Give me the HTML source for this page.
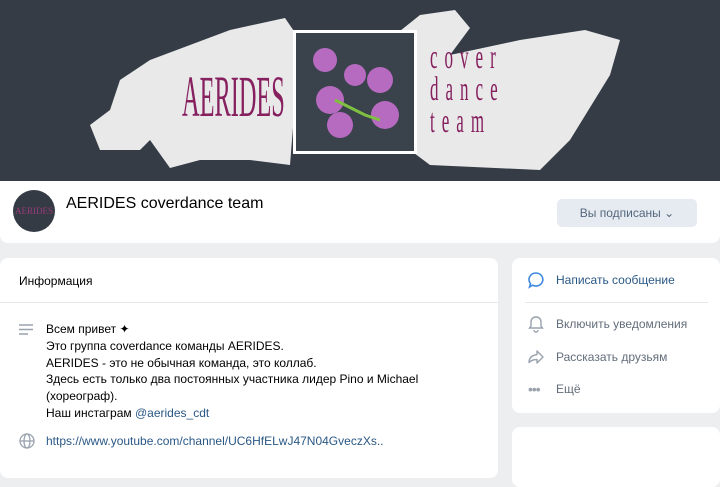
<!DOCTYPE html>
<html><head><meta charset="utf-8"><style>
*{margin:0;padding:0;box-sizing:border-box}
body{width:720px;height:468px;overflow:hidden;background:#edeef0;font-family:"Liberation Sans",sans-serif;position:relative}
.abs{position:absolute}
.card{position:absolute;background:#fff;border-radius:8px}
.t{font-size:12px;color:#000;line-height:16.8px}
.side{position:absolute;left:556px;font-size:12px;color:#626d7a}
</style></head><body>
<div class="abs" style="left:0;top:0;width:720px;height:181px;background:#353c46;overflow:hidden">
<svg width="720" height="181" class="abs" style="left:0;top:0">
<path d="M110 110 L120 80 L150 60 L230 30 L285 18 L300 40 L290 165 L250 160 L200 160 L170 168 L150 140 L140 150 L100 150 L90 125 Z" fill="#e9e9e9"/>
<path d="M395 35 L420 15 L455 10 L470 28 L450 55 L520 40 L585 30 L620 40 L610 75 L570 140 L540 170 L430 165 L410 150 Z" fill="#e9e9e9"/>
</svg>
<div class="abs" style="left:293px;top:30px;width:124px;height:124px;border:3px solid #fff;background:#3a424c"></div>
<svg class="abs" style="left:305px;top:40px" width="100" height="105">
<g fill="#b66ac0"><circle cx="20" cy="20" r="12"/><circle cx="50" cy="35" r="11"/><circle cx="75" cy="40" r="13"/><circle cx="25" cy="60" r="14"/><circle cx="80" cy="75" r="14"/><circle cx="35" cy="85" r="13"/></g>
<path d="M30 60 L60 75 L75 80" stroke="#7fc040" stroke-width="3" fill="none"/></svg>
<div class="abs" style="left:182px;top:66px;font-family:'Liberation Serif',serif;font-size:58px;color:#86205f;transform:scaleX(0.42);transform-origin:left;line-height:62px;width:260px">AERIDES</div>
<div class="abs" style="left:430px;top:42px;font-family:'Liberation Serif',serif;font-size:34px;color:#86205f;line-height:32px;letter-spacing:14px;transform:scaleX(0.5);transform-origin:left;white-space:nowrap">cover<br>dance<br>team</div>
</div>
<div class="card" style="left:0;top:181px;width:720px;height:62px;border-radius:0 0 8px 8px"></div>
<div class="abs" style="left:13px;top:190px;width:42px;height:42px;border-radius:50%;background:#343b44;color:#9a3a7a;font-family:'Liberation Serif',serif;font-size:9px;text-align:center;line-height:42px">AERIDES</div>
<div class="abs" style="left:66px;top:195px;font-size:16px;color:#000">AERIDES coverdance team</div>
<div class="abs" style="left:557px;top:199px;width:140px;height:28px;border-radius:5px;background:#e5ebf1;font-size:12px;color:#55677d;text-align:center;line-height:28px">Вы подписаны ⌄</div>
<div class="card" style="left:0;top:258px;width:498px;height:220px"></div>
<div class="abs" style="left:0;top:302px;width:498px;height:1px;background:#e7e8ec"></div>
<div class="abs" style="left:19px;top:274px;font-size:12px;color:#000">Информация</div>
<svg class="abs" style="left:19px;top:324px" width="16" height="12"><path d="M0 1h14M0 5.5h14M0 10h9" stroke="#99a2ad" stroke-width="1.5"/></svg>
<div class="abs t" style="left:46px;top:321px">Всем привет ✦<br>Это группа coverdance команды AERIDES.<br>AERIDES - это не обычная команда, это коллаб.<br>Здесь есть только два постоянных участника лидер Pino и Michael<br>(хореограф).<br>Наш инстаграм <span style="color:#2a5885">@aerides_cdt</span></div>
<svg class="abs" style="left:19px;top:433px" width="16" height="16"><g fill="none" stroke="#99a2ad" stroke-width="1.3"><circle cx="8" cy="8" r="7"/><ellipse cx="8" cy="8" rx="3" ry="7"/><path d="M1 8h14"/></g></svg>
<div class="abs t" style="left:46px;top:433px;color:#2a5885">https://www.youtube.com/channel/UC6HfELwJ47N04GveczXs..</div>
<div class="card" style="left:512px;top:258px;width:208px;height:155px"></div>
<div class="card" style="left:512px;top:427px;width:208px;height:60px"></div>
<div class="abs" style="left:525px;top:302px;width:183px;height:1px;background:#e7e8ec"></div>
<svg class="abs" style="left:527px;top:271px" width="18" height="18"><path d="M9 2a7 6.5 0 1 1-3.5 12.2L2.5 16l1-3.5A7 6.5 0 0 1 9 2z" fill="none" stroke="#3f8ae0" stroke-width="1.6"/></svg>
<div class="side" style="top:273px;color:#2a5885">Написать сообщение</div>
<svg class="abs" style="left:528px;top:315px" width="16" height="18"><path d="M8 2c-3 0-5 2-5 5v4l-1.5 2h13L13 11V7c0-3-2-5-5-5zM6 15a2 2 0 0 0 4 0" fill="none" stroke="#99a2ad" stroke-width="1.4"/></svg>
<div class="side" style="top:317px">Включить уведомления</div>
<svg class="abs" style="left:527px;top:349px" width="18" height="16"><path d="M10 2l6 6-6 6v-3.5c-4 0-6 1-8 3 0-4 2-7 8-8z" fill="none" stroke="#99a2ad" stroke-width="1.4" stroke-linejoin="round"/></svg>
<div class="side" style="top:350px">Рассказать друзьям</div>
<div class="abs" style="left:528px;top:381px;color:#99a2ad;font-size:14px;letter-spacing:-1px">•••</div>
<div class="side" style="top:382px">Ещё</div>
</body></html>
